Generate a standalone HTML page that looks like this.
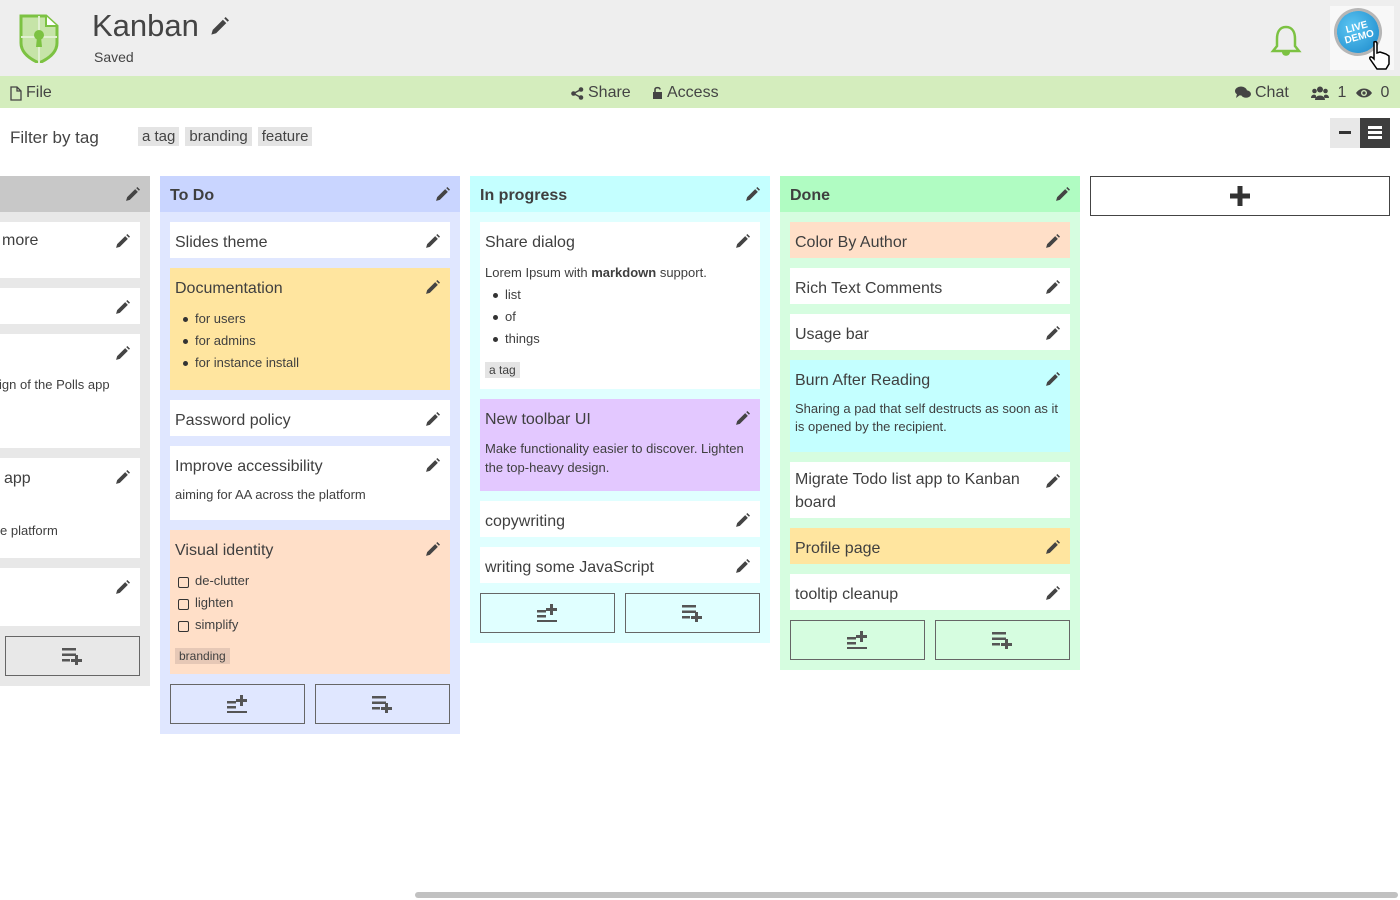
<!DOCTYPE html>
<html><head><meta charset="utf-8"><style>
*{box-sizing:border-box;margin:0;padding:0}
body{width:1400px;height:900px;overflow:hidden;background:#fff;font-family:"Liberation Sans",sans-serif;color:#3f3f3f;position:relative}
.a{position:absolute}
.hdr{left:0;top:0;width:1400px;height:76px;background:#eeeeee}
.tb{left:0;top:76px;width:1400px;height:32px;background:#d4edbd;font-size:16px;color:#444}
.tb span{position:absolute;top:8px;display:flex;align-items:center;gap:4px}
.tag{display:inline-block;background:#e4e4e4;font-size:15px;padding:1px 4px;margin-right:6px;color:#444}
.col{position:absolute;top:176px;width:300px}
.ch{height:36px;font-weight:bold;font-size:16px;padding:11px 10px;position:relative}
.card{position:absolute;left:10px;width:280px;background:#fff;padding:9px 5px}
.t{font-size:16px;line-height:23px;padding-right:30px}
.b{font-size:13px;line-height:22px;margin-top:8px}
.pn{position:absolute;right:10px;top:12px}
.ch .pn{top:11px}
ul{list-style:none}
li{padding-left:20px;position:relative}
li:before{content:"";position:absolute;left:8px;top:9px;width:5px;height:5px;border-radius:50%;background:#333}
.cb li:before{border-radius:2px;background:none;border:1px solid #333;width:9px;height:9px;left:3px;top:7px}
.ct{display:inline-block;font-size:12px;padding:1px 4px;margin-top:10px}
.btn{position:absolute;width:135px;height:40px;border:1px solid #666;display:flex;align-items:center;justify-content:center}
</style></head><body>
<div class="a hdr"></div>
<svg class="a" style="left:18px;top:13px" width="42" height="50" viewBox="0 0 42 50">
<path d="M3 3 H28 L39 13 V30 C39 40 30 46 21 50 C12 46 3 40 3 30 Z" fill="#c6e4a8" stroke="#7cc242" stroke-width="3"/>
<path d="M21 3 V50 M3 24 H39" stroke="#e0f0d0" stroke-width="2"/>
<path d="M28 3 V13 H39" fill="#fff" stroke="#7cc242" stroke-width="2"/>
<circle cx="21" cy="22" r="5" fill="#7cc242"/><path d="M19 24 H23 L24 34 H18Z" fill="#7cc242"/>
</svg>
<div class="a" style="left:92px;top:8px;font-size:31px;color:#444">Kanban</div>
<svg class="a" style="left:210px;top:17px" width="19" height="19" viewBox="0 0 14 14"><path d="M1 13 L2 9.5 L9.5 2 L12 4.5 L4.5 12 Z M10.5 1 L11.5 0 L14 2.5 L13 3.5Z" fill="#444"/></svg>
<div class="a" style="left:94px;top:49px;font-size:14px;color:#444">Saved</div>
<svg class="a" style="left:1270px;top:24px" width="32" height="34" viewBox="0 0 32 34"><path d="M16 3 C9 3 7 9 7 15 V22 L3 27 H29 L25 22 V15 C25 9 23 3 16 3Z" fill="none" stroke="#7cc242" stroke-width="2.5"/><path d="M12 28 C12 33 20 33 20 28" fill="#7cc242"/></svg>
<div class="a" style="left:1330px;top:6px;width:64px;height:64px;background:#f8f8f8"></div>
<div class="a" style="left:1334px;top:8px;width:48px;height:48px;border-radius:50%;background:radial-gradient(circle at 40% 35%,#5cc6f3,#1a87c9);border:3px solid #b6b6b6;color:#fff;font-size:10px;font-weight:bold;text-align:center;line-height:10px;padding-top:12px;transform:rotate(-15deg)">LIVE<br>DEMO</div>
<svg class="a" style="left:1366px;top:40px" width="28" height="30" viewBox="0 0 28 30"><path d="M8 2 C10 1 11 2 11 4 V13 L14 12 L17 13 L20 14 L23 16 V24 L20 29 H11 L4 19 C3 17 5 16 7 18 L8 19 Z" fill="#fff" stroke="#000" stroke-width="1.5"/></svg>
<div class="a tb">
<span style="left:10px"><svg width="12" height="15" viewBox="0 0 12 15"><path d="M1 1H7L11 5V14H1Z M7 1V5H11" fill="none" stroke="#444" stroke-width="1.3"/></svg>File</span>
<span style="left:571px"><svg width="13" height="13" viewBox="0 0 13 13"><circle cx="10" cy="2.5" r="2.3" fill="#444"/><circle cx="10" cy="10.5" r="2.3" fill="#444"/><circle cx="2.5" cy="6.5" r="2.3" fill="#444"/><path d="M2.5 6.5L10 2.5M2.5 6.5L10 10.5" stroke="#444" stroke-width="1.5"/></svg>Share</span>
<span style="left:652px"><svg width="11" height="14" viewBox="0 0 11 14"><rect x="1" y="6" width="9" height="7" fill="#444"/><path d="M3 6V3.5C3 1 8 1 8 3.5" fill="none" stroke="#444" stroke-width="1.6"/></svg>Access</span>
<span style="left:1235px"><svg width="16" height="14" viewBox="0 0 16 14"><ellipse cx="6" cy="5" rx="6" ry="4.5" fill="#444"/><path d="M2 8L1 12L5 9Z" fill="#444"/><ellipse cx="11" cy="8" rx="5" ry="3.8" fill="#444"/></svg>Chat</span>
<span style="left:1311px"><svg width="18" height="14" viewBox="0 0 18 14"><circle cx="9" cy="3.5" r="3" fill="#444"/><circle cx="3.5" cy="5" r="2.3" fill="#444"/><circle cx="14.5" cy="5" r="2.3" fill="#444"/><path d="M4 14C4 8 14 8 14 14Z M0 12C0 8 5 8 5 10V12Z M18 12C18 8 13 8 13 10V12Z" fill="#444"/></svg>&nbsp;1</span>
<span style="left:1356px"><svg width="16" height="12" viewBox="0 0 16 12"><path d="M0 6C4 0 12 0 16 6C12 12 4 12 0 6Z" fill="#444"/><circle cx="8" cy="6" r="3" fill="#d4edbd"/><circle cx="8" cy="6" r="1.6" fill="#444"/></svg>&nbsp;0</span>
</div>
<div class="a" style="left:10px;top:128px;font-size:17px;color:#444">Filter by tag</div>
<div class="a" style="left:138px;top:127px"><span class="tag">a tag</span><span class="tag">branding</span><span class="tag">feature</span></div>
<div class="a" style="left:1330px;top:118px;width:30px;height:30px;background:#e8e8e8"><div class="a" style="left:9px;top:13px;width:12px;height:3px;background:#333"></div></div>
<div class="a" style="left:1360px;top:118px;width:30px;height:30px;background:#3e3e3e"><div class="a" style="left:8px;top:8px;width:14px;height:3px;background:#fff;box-shadow:0 5px 0 #fff,0 10px 0 #fff"></div></div>

<!-- column 0 -->
<div class="col" style="left:-150px;height:510px;background:#e8e8e8">
<div class="ch" style="background:#c8c8c8"><svg class="pn" width="15" height="15" viewBox="0 0 14 14"><path d="M1 13 L2 9.5 L9.5 2 L12 4.5 L4.5 12 Z M10.5 1 L11.5 0 L14 2.5 L13 3.5Z" fill="#444"/></svg></div>
<div class="card" style="top:46px;height:56px"><div class="t" style="padding-left:137px;margin-top:-2px">more</div><svg class="pn" width="15" height="15" viewBox="0 0 14 14"><path d="M1 13 L2 9.5 L9.5 2 L12 4.5 L4.5 12 Z M10.5 1 L11.5 0 L14 2.5 L13 3.5Z" fill="#444"/></svg></div>
<div class="card" style="top:112px;height:36px"><svg class="pn" width="15" height="15" viewBox="0 0 14 14"><path d="M1 13 L2 9.5 L9.5 2 L12 4.5 L4.5 12 Z M10.5 1 L11.5 0 L14 2.5 L13 3.5Z" fill="#444"/></svg></div>
<div class="card" style="top:158px;height:114px"><div class="b" style="position:absolute;top:32px;left:139px;white-space:nowrap">ign of the Polls app</div><svg class="pn" width="15" height="15" viewBox="0 0 14 14"><path d="M1 13 L2 9.5 L9.5 2 L12 4.5 L4.5 12 Z M10.5 1 L11.5 0 L14 2.5 L13 3.5Z" fill="#444"/></svg></div>
<div class="card" style="top:282px;height:100px"><div class="t" style="padding-left:139px">app</div><div class="b" style="position:absolute;top:54px;left:140px;white-space:nowrap">e platform</div><svg class="pn" width="15" height="15" viewBox="0 0 14 14"><path d="M1 13 L2 9.5 L9.5 2 L12 4.5 L4.5 12 Z M10.5 1 L11.5 0 L14 2.5 L13 3.5Z" fill="#444"/></svg></div>
<div class="card" style="top:392px;height:58px"><svg class="pn" width="15" height="15" viewBox="0 0 14 14"><path d="M1 13 L2 9.5 L9.5 2 L12 4.5 L4.5 12 Z M10.5 1 L11.5 0 L14 2.5 L13 3.5Z" fill="#444"/></svg></div>
<div class="btn" style="left:155px;top:460px"><svg width="22" height="18" viewBox="0 0 22 18"><path d="M0 1h14v2.5H0zM0 6.5h14V9H0zM0 12h8v2.5H0zM13 8h3v4h4v3h-4v4h-3v-4H9v-3h4z" fill="#555"/></svg></div>
</div>

<!-- To Do -->
<div class="col" style="left:160px;height:558px;background:#e0e7ff">
<div class="ch" style="background:#c9d5ff">To Do<svg class="pn" width="15" height="15" viewBox="0 0 14 14"><path d="M1 13 L2 9.5 L9.5 2 L12 4.5 L4.5 12 Z M10.5 1 L11.5 0 L14 2.5 L13 3.5Z" fill="#444"/></svg></div>
<div class="card" style="top:46px;height:36px"><div class="t">Slides theme</div><svg class="pn" width="15" height="15" viewBox="0 0 14 14"><path d="M1 13 L2 9.5 L9.5 2 L12 4.5 L4.5 12 Z M10.5 1 L11.5 0 L14 2.5 L13 3.5Z" fill="#444"/></svg></div>
<div class="card" style="top:92px;height:122px;background:#ffe59f"><div class="t">Documentation</div><ul class="b" style="margin-top:8px"><li>for users</li><li>for admins</li><li>for instance install</li></ul><svg class="pn" width="15" height="15" viewBox="0 0 14 14"><path d="M1 13 L2 9.5 L9.5 2 L12 4.5 L4.5 12 Z M10.5 1 L11.5 0 L14 2.5 L13 3.5Z" fill="#444"/></svg></div>
<div class="card" style="top:224px;height:36px"><div class="t">Password policy</div><svg class="pn" width="15" height="15" viewBox="0 0 14 14"><path d="M1 13 L2 9.5 L9.5 2 L12 4.5 L4.5 12 Z M10.5 1 L11.5 0 L14 2.5 L13 3.5Z" fill="#444"/></svg></div>
<div class="card" style="top:270px;height:74px"><div class="t">Improve accessibility</div><div class="b" style="margin-top:6px">aiming for AA across the platform</div><svg class="pn" width="15" height="15" viewBox="0 0 14 14"><path d="M1 13 L2 9.5 L9.5 2 L12 4.5 L4.5 12 Z M10.5 1 L11.5 0 L14 2.5 L13 3.5Z" fill="#444"/></svg></div>
<div class="card" style="top:354px;height:144px;background:#ffdfc8"><div class="t">Visual identity</div><ul class="b cb" style="margin-top:8px"><li>de-clutter</li><li>lighten</li><li>simplify</li></ul><span class="ct" style="background:#e6c8b6;margin-top:12px">branding</span><svg class="pn" width="15" height="15" viewBox="0 0 14 14"><path d="M1 13 L2 9.5 L9.5 2 L12 4.5 L4.5 12 Z M10.5 1 L11.5 0 L14 2.5 L13 3.5Z" fill="#444"/></svg></div>
<div class="btn" style="left:10px;top:508px"><svg width="22" height="18" viewBox="0 0 22 18"><path d="M0 6h9v2.5H0zM0 11h9v2.5H0zM0 16h20v2H0zM13 0h3v4h4v3h-4v4h-3V7H9V4h4z" fill="#555"/></svg></div>
<div class="btn" style="left:155px;top:508px"><svg width="22" height="18" viewBox="0 0 22 18"><path d="M0 1h14v2.5H0zM0 6.5h14V9H0zM0 12h8v2.5H0zM13 8h3v4h4v3h-4v4h-3v-4H9v-3h4z" fill="#555"/></svg></div>
</div>

<!-- In progress -->
<div class="col" style="left:470px;height:467px;background:#e0ffff">
<div class="ch" style="background:#c4ffff">In progress<svg class="pn" width="15" height="15" viewBox="0 0 14 14"><path d="M1 13 L2 9.5 L9.5 2 L12 4.5 L4.5 12 Z M10.5 1 L11.5 0 L14 2.5 L13 3.5Z" fill="#444"/></svg></div>
<div class="card" style="top:46px;height:167px"><div class="t">Share dialog</div><div class="b" style="margin-top:8px">Lorem Ipsum with <b>markdown</b> support.</div><ul class="b" style="margin-top:0"><li>list</li><li>of</li><li>things</li></ul><span class="ct" style="background:#e4e4e4;margin-top:12px">a tag</span><svg class="pn" width="15" height="15" viewBox="0 0 14 14"><path d="M1 13 L2 9.5 L9.5 2 L12 4.5 L4.5 12 Z M10.5 1 L11.5 0 L14 2.5 L13 3.5Z" fill="#444"/></svg></div>
<div class="card" style="top:223px;height:92px;background:#e3c8ff"><div class="t">New toolbar UI</div><div class="b" style="margin-top:8px;line-height:19px">Make functionality easier to discover. Lighten the top-heavy design.</div><svg class="pn" width="15" height="15" viewBox="0 0 14 14"><path d="M1 13 L2 9.5 L9.5 2 L12 4.5 L4.5 12 Z M10.5 1 L11.5 0 L14 2.5 L13 3.5Z" fill="#444"/></svg></div>
<div class="card" style="top:325px;height:36px"><div class="t">copywriting</div><svg class="pn" width="15" height="15" viewBox="0 0 14 14"><path d="M1 13 L2 9.5 L9.5 2 L12 4.5 L4.5 12 Z M10.5 1 L11.5 0 L14 2.5 L13 3.5Z" fill="#444"/></svg></div>
<div class="card" style="top:371px;height:36px"><div class="t">writing some JavaScript</div><svg class="pn" width="15" height="15" viewBox="0 0 14 14"><path d="M1 13 L2 9.5 L9.5 2 L12 4.5 L4.5 12 Z M10.5 1 L11.5 0 L14 2.5 L13 3.5Z" fill="#444"/></svg></div>
<div class="btn" style="left:10px;top:417px"><svg width="22" height="18" viewBox="0 0 22 18"><path d="M0 6h9v2.5H0zM0 11h9v2.5H0zM0 16h20v2H0zM13 0h3v4h4v3h-4v4h-3V7H9V4h4z" fill="#555"/></svg></div>
<div class="btn" style="left:155px;top:417px"><svg width="22" height="18" viewBox="0 0 22 18"><path d="M0 1h14v2.5H0zM0 6.5h14V9H0zM0 12h8v2.5H0zM13 8h3v4h4v3h-4v4h-3v-4H9v-3h4z" fill="#555"/></svg></div>
</div>

<!-- Done -->
<div class="col" style="left:780px;height:494px;background:#d6fde0">
<div class="ch" style="background:#b0fcc2">Done<svg class="pn" width="15" height="15" viewBox="0 0 14 14"><path d="M1 13 L2 9.5 L9.5 2 L12 4.5 L4.5 12 Z M10.5 1 L11.5 0 L14 2.5 L13 3.5Z" fill="#444"/></svg></div>
<div class="card" style="top:46px;height:36px;background:#ffdfc8"><div class="t">Color By Author</div><svg class="pn" width="15" height="15" viewBox="0 0 14 14"><path d="M1 13 L2 9.5 L9.5 2 L12 4.5 L4.5 12 Z M10.5 1 L11.5 0 L14 2.5 L13 3.5Z" fill="#444"/></svg></div>
<div class="card" style="top:92px;height:36px"><div class="t">Rich Text Comments</div><svg class="pn" width="15" height="15" viewBox="0 0 14 14"><path d="M1 13 L2 9.5 L9.5 2 L12 4.5 L4.5 12 Z M10.5 1 L11.5 0 L14 2.5 L13 3.5Z" fill="#444"/></svg></div>
<div class="card" style="top:138px;height:36px"><div class="t">Usage bar</div><svg class="pn" width="15" height="15" viewBox="0 0 14 14"><path d="M1 13 L2 9.5 L9.5 2 L12 4.5 L4.5 12 Z M10.5 1 L11.5 0 L14 2.5 L13 3.5Z" fill="#444"/></svg></div>
<div class="card" style="top:184px;height:92px;background:#c4ffff"><div class="t">Burn After Reading</div><div class="b" style="margin-top:8px;line-height:18px">Sharing a pad that self destructs as soon as it is opened by the recipient.</div><svg class="pn" width="15" height="15" viewBox="0 0 14 14"><path d="M1 13 L2 9.5 L9.5 2 L12 4.5 L4.5 12 Z M10.5 1 L11.5 0 L14 2.5 L13 3.5Z" fill="#444"/></svg></div>
<div class="card" style="top:286px;height:56px;padding-top:6px"><div class="t">Migrate Todo list app to Kanban board</div><svg class="pn" width="15" height="15" viewBox="0 0 14 14"><path d="M1 13 L2 9.5 L9.5 2 L12 4.5 L4.5 12 Z M10.5 1 L11.5 0 L14 2.5 L13 3.5Z" fill="#444"/></svg></div>
<div class="card" style="top:352px;height:36px;background:#ffe59f"><div class="t">Profile page</div><svg class="pn" width="15" height="15" viewBox="0 0 14 14"><path d="M1 13 L2 9.5 L9.5 2 L12 4.5 L4.5 12 Z M10.5 1 L11.5 0 L14 2.5 L13 3.5Z" fill="#444"/></svg></div>
<div class="card" style="top:398px;height:36px"><div class="t">tooltip cleanup</div><svg class="pn" width="15" height="15" viewBox="0 0 14 14"><path d="M1 13 L2 9.5 L9.5 2 L12 4.5 L4.5 12 Z M10.5 1 L11.5 0 L14 2.5 L13 3.5Z" fill="#444"/></svg></div>
<div class="btn" style="left:10px;top:444px"><svg width="22" height="18" viewBox="0 0 22 18"><path d="M0 6h9v2.5H0zM0 11h9v2.5H0zM0 16h20v2H0zM13 0h3v4h4v3h-4v4h-3V7H9V4h4z" fill="#555"/></svg></div>
<div class="btn" style="left:155px;top:444px"><svg width="22" height="18" viewBox="0 0 22 18"><path d="M0 1h14v2.5H0zM0 6.5h14V9H0zM0 12h8v2.5H0zM13 8h3v4h4v3h-4v4h-3v-4H9v-3h4z" fill="#555"/></svg></div>
</div>

<div class="a" style="left:1090px;top:176px;width:300px;height:40px;border:1px solid #444;display:flex;align-items:center;justify-content:center"><svg width="20" height="20" viewBox="0 0 20 20"><path d="M7.5 0h5v7.5H20v5h-7.5V20h-5v-7.5H0v-5h7.5z" fill="#333"/></svg></div>

<div class="a" style="left:415px;top:892px;width:983px;height:6px;border-radius:3px;background:#c1c1c1"></div>
</body></html>
